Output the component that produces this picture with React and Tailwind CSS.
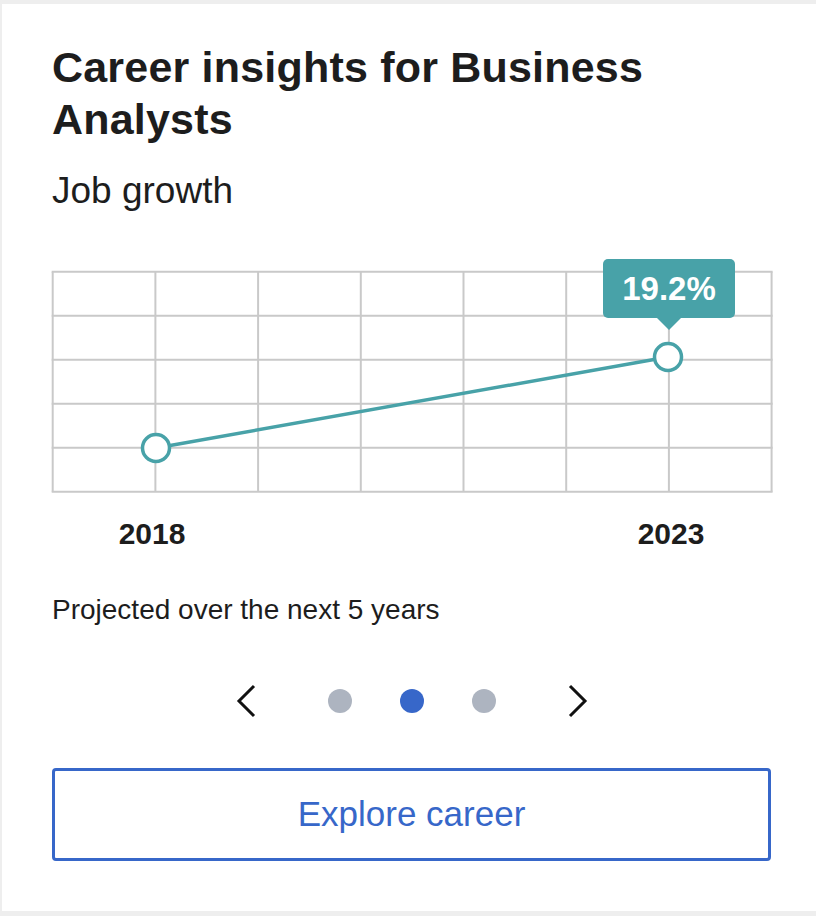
import React from 'react';

const TEAL = '#48a2a8';

// grid geometry (local svg coords)
const cols = [0, 1, 2, 3, 4, 5, 6, 7].map((i) => 1.7 + i * 102.7);
const rows = [0, 1, 2, 3, 4, 5].map((j) => 1.7 + j * 44);

const JobGrowthChart = () => {
  return (
    <div className="relative mt-[57px] -ml-[1px] w-[722px] h-[223px]">
      <svg width="722" height="223" viewBox="0 0 722 223" className="block">
        {cols.map((x) => (
          <line key={`c${x}`} x1={x} y1={rows[0]} x2={x} y2={rows[5]} stroke="#c9c9c9" strokeWidth="2" />
        ))}
        {rows.map((y) => (
          <line key={`r${y}`} x1={cols[0] - 1} y1={y} x2={cols[7] + 1} y2={y} stroke="#c9c9c9" strokeWidth="2" />
        ))}
        <line x1="105" y1="178" x2="617" y2="87" stroke={TEAL} strokeWidth="3.5" />
        <circle cx="105" cy="178" r="13.5" fill="#fff" stroke={TEAL} strokeWidth="3.5" />
        <circle cx="617" cy="87" r="13.5" fill="#fff" stroke={TEAL} strokeWidth="3.5" />
      </svg>

      {/* value tooltip */}
      <div className="absolute left-[552px] top-[-11px] flex flex-col items-center">
        <div className="w-[132px] h-[59px] rounded-[5px] bg-[#48a2a8] flex items-center justify-center text-white font-bold text-[33px] leading-none">
          19.2%
        </div>
        <div className="w-0 h-0 border-l-[12px] border-r-[12px] border-t-[12px] border-l-transparent border-r-transparent border-t-[#48a2a8]" />
      </div>
    </div>
  );
};

const Chevron = ({ dir }) => (
  <svg width="20" height="34" viewBox="0 0 20 34" fill="none">
    <path
      d={dir === 'left' ? 'M18 2 L3 17 L18 32' : 'M2 2 L17 17 L2 32'}
      stroke="#111"
      strokeWidth="3"
      strokeLinecap="butt"
      strokeLinejoin="miter"
    />
  </svg>
);

export default function App() {
  return (
    <div className="min-h-[916px] bg-[#eeeeee] pt-[4px] pl-[2px]" style={{ fontFamily: '"Liberation Sans", Arial, sans-serif' }}>
      <div className="w-[814px] bg-white pt-[37px] pl-[50px] pr-[45px] pb-[50px] text-[#1d1d1d]">
        <h1 className="font-bold text-[43px] leading-[52px] tracking-[0.2px]">
          Career insights for Business
          <br />
          Analysts
        </h1>

        <p className="mt-[24px] text-[37px] leading-[44px]">Job growth</p>

        <JobGrowthChart />

        {/* year labels */}
        <div className="mt-[23px] flex font-bold text-[30px] leading-[36px]">
          <span className="ml-[40px] w-[120px] text-center">2018</span>
          <span className="ml-[399px] w-[120px] text-center">2023</span>
        </div>

        <p className="mt-[41px] text-[28px] leading-[34px]">Projected over the next 5 years</p>

        {/* carousel controls */}
        <div className="mt-[57px] flex items-center justify-center gap-[72px] h-[34px]">
          <Chevron dir="left" />
          <div className="flex items-center gap-[48px]">
            <span className="w-[24px] h-[24px] rounded-full bg-[#adb4c0]" />
            <span className="w-[24px] h-[24px] rounded-full bg-[#3767c9]" />
            <span className="w-[24px] h-[24px] rounded-full bg-[#adb4c0]" />
          </div>
          <Chevron dir="right" />
        </div>

        <button className="mt-[50px] w-[719px] h-[93px] border-[3px] border-[#3767c9] rounded-[4px] text-[#3767c9] text-[35px] flex items-center justify-center">
          Explore career
        </button>
      </div>
    </div>
  );
}
